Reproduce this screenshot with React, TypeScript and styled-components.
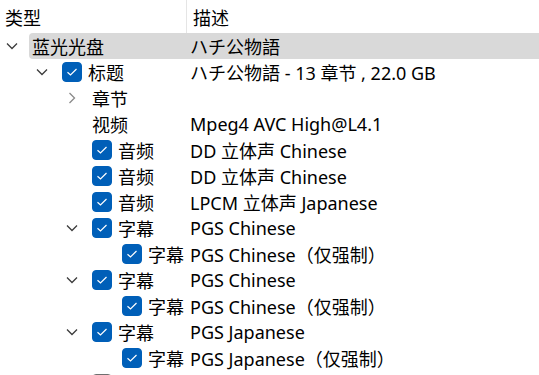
import React from "react";
import { styled, createGlobalStyle } from "styled-components";

const GlobalStyle = createGlobalStyle`
  html, body {
    margin: 0;
    padding: 0;
    background: #ffffff;
  }

  body {
    font-family: "Noto Sans", "Noto Sans CJK SC", sans-serif;
    font-size: 18px;
    color: #000000;
    overflow: hidden;
  }
`;

const Tree = styled.div`
  width: 539px;
  height: 375px;
  overflow: hidden;
  display: flex;
  flex-direction: column;
`;

const Header = styled.div`
  height: 33px;
  display: flex;
  align-items: center;
  flex-shrink: 0;
`;

const HeaderCell = styled.div<{ $first?: boolean }>`
  height: 100%;
  display: flex;
  align-items: center;
  box-sizing: border-box;
  white-space: nowrap;

  ${({ $first }) =>
    $first
      ? `
    width: 187px;
    padding-left: 5px;
    border-right: 1px solid #e5e5e5;
  `
      : `
    flex: 1;
    padding-left: 6px;
  `}
`;

const Row = styled.div`
  height: 26px;
  display: flex;
  flex-shrink: 0;
`;

const Lead = styled.div<{ $level: number }>`
  width: ${({ $level }) => $level * 30 + 29}px;
  padding-left: ${({ $level }) => $level * 30 + 4}px;
  box-sizing: border-box;
  display: flex;
  align-items: center;
  flex-shrink: 0;
`;

const Body = styled.div<{ $selected?: boolean }>`
  flex: 1;
  display: flex;
  align-items: center;
  background: ${({ $selected }) => ($selected ? "#d9d9d9" : "transparent")};
  border-radius: 4px 0 0 4px;
`;

const TypeCell = styled.div<{ $level: number }>`
  width: ${({ $level }) => 157 - $level * 30}px;
  padding-left: 3px;
  box-sizing: border-box;
  display: flex;
  align-items: center;
  gap: 6px;
  white-space: nowrap;
  flex-shrink: 0;
`;

const DescCell = styled.div`
  padding-left: 4px;
  white-space: nowrap;
`;

const Box = styled.span<{ $checked: boolean }>`
  width: 20px;
  height: 20px;
  box-sizing: border-box;
  border-radius: 4px;
  flex-shrink: 0;
  display: flex;
  align-items: center;
  justify-content: center;
  background: ${({ $checked }) => ($checked ? "#005fb8" : "#ffffff")};
  border: 1px solid ${({ $checked }) => ($checked ? "#005fb8" : "#6f6f6f")};
`;

type Expand = "open" | "closed" | "none";

type Node = {
  level: number;
  type: string;
  desc: string;
  expand: Expand;
  check?: boolean;
  selected?: boolean;
};

const rows: Node[] = [
  { level: 0, type: "蓝光光盘", desc: "ハチ公物語", expand: "open", selected: true },
  { level: 1, type: "标题", desc: "ハチ公物語 - 13 章节 , 22.0 GB", expand: "open", check: true },
  { level: 2, type: "章节", desc: "", expand: "closed" },
  { level: 2, type: "视频", desc: "Mpeg4 AVC High@L4.1", expand: "none" },
  { level: 2, type: "音频", desc: "DD 立体声 Chinese", expand: "none", check: true },
  { level: 2, type: "音频", desc: "DD 立体声 Chinese", expand: "none", check: true },
  { level: 2, type: "音频", desc: "LPCM 立体声 Japanese", expand: "none", check: true },
  { level: 2, type: "字幕", desc: "PGS Chinese", expand: "open", check: true },
  { level: 3, type: "字幕", desc: "PGS Chinese（仅强制）", expand: "none", check: true },
  { level: 2, type: "字幕", desc: "PGS Chinese", expand: "open", check: true },
  { level: 3, type: "字幕", desc: "PGS Chinese（仅强制）", expand: "none", check: true },
  { level: 2, type: "字幕", desc: "PGS Japanese", expand: "open", check: true },
  { level: 3, type: "字幕", desc: "PGS Japanese（仅强制）", expand: "none", check: true },
  // only the top edge of this row's checkbox shows at the bottom of the view
  { level: 2, type: "", desc: "", expand: "none", check: false },
];

const Chevron = ({ expand }: { expand: Expand }) => {
  if (expand === "none") return null;
  return (
    <svg width="16" height="16" viewBox="0 0 16 16" fill="none">
      {expand === "open" ? (
        <path d="M3 5.5 L8 10.5 L13 5.5" stroke="#3c3c3c" strokeWidth="1.3" />
      ) : (
        <path d="M5.5 3 L10.5 8 L5.5 13" stroke="#8a8a8a" strokeWidth="1.3" />
      )}
    </svg>
  );
};

const CheckBox = ({ checked }: { checked: boolean }) => (
  <Box $checked={checked}>
    {checked && (
      <svg width="14" height="14" viewBox="0 0 14 14" fill="none">
        <path d="M2.5 7.2 L5.5 10 L11.5 4" stroke="#ffffff" strokeWidth="1.2" />
      </svg>
    )}
  </Box>
);

const App = () => {
  return (
    <Tree>
      <GlobalStyle />
      <Header>
        <HeaderCell $first>类型</HeaderCell>
        <HeaderCell>描述</HeaderCell>
      </Header>
      {rows.map((r, i) => (
        <Row key={i}>
          <Lead $level={r.level}>
            <Chevron expand={r.expand} />
          </Lead>
          <Body $selected={r.selected}>
            <TypeCell $level={r.level}>
              {r.check !== undefined && <CheckBox checked={r.check} />}
              {r.type && <span>{r.type}</span>}
            </TypeCell>
            {r.desc && <DescCell>{r.desc}</DescCell>}
          </Body>
        </Row>
      ))}
    </Tree>
  );
};

export default App;
